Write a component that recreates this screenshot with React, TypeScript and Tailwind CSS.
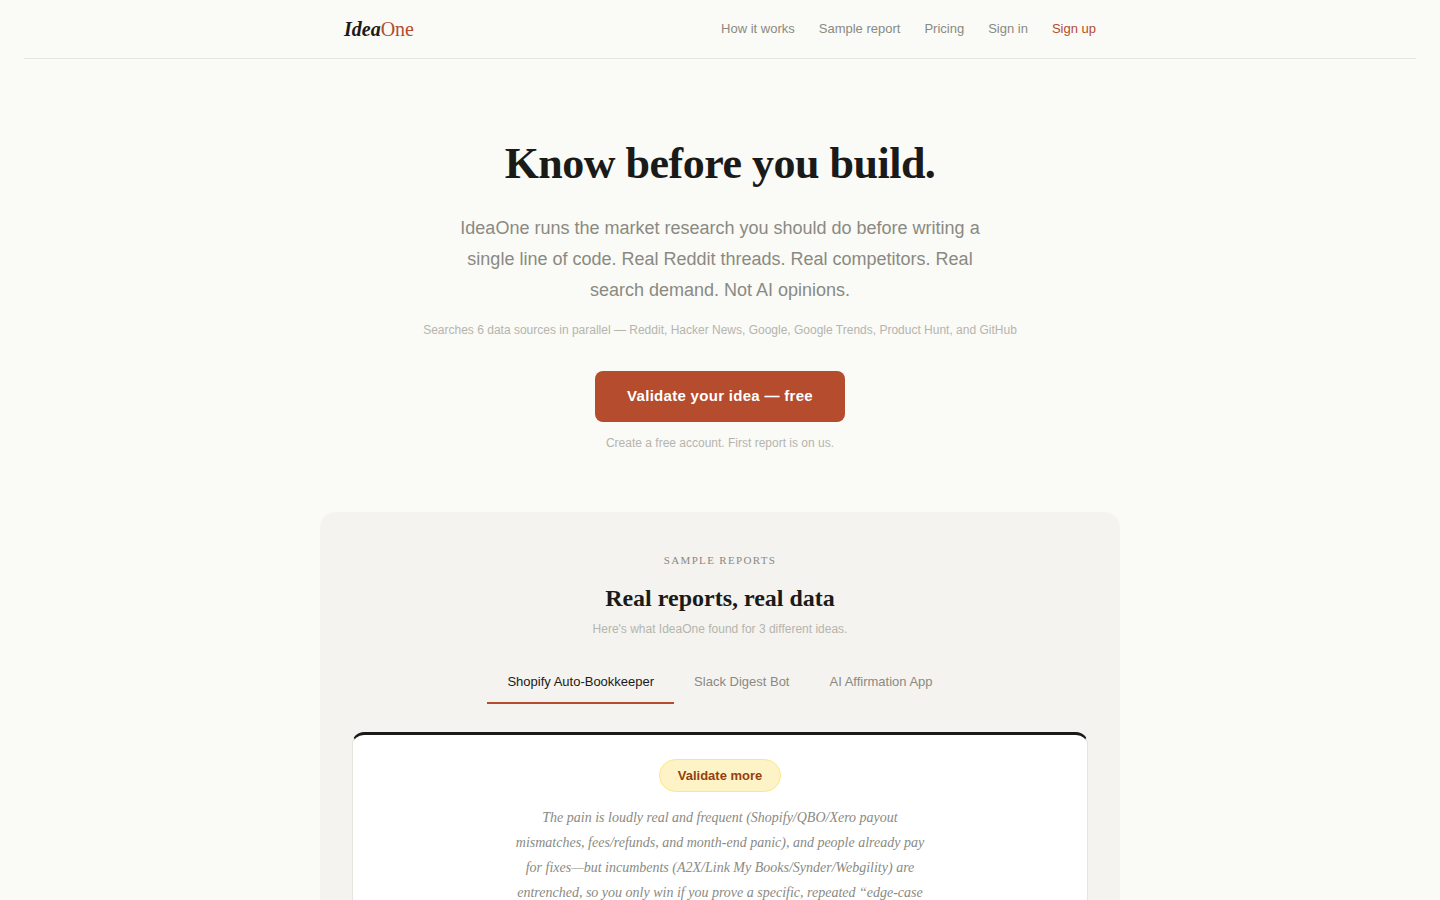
import { useState } from "react";

const links = [
  { label: "How it works", href: "#how" },
  { label: "Sample report", href: "#sample" },
  { label: "Pricing", href: "#pricing" },
  { label: "Sign in", href: "#signin" },
];

const tabs = ["Shopify Auto-Bookkeeper", "Slack Digest Bot", "AI Affirmation App"];

export default function App() {
  const [active, setActive] = useState(0);

  return (
    <div className="min-h-screen bg-[#fafaf7] px-6 font-['Liberation_Sans',Arial,sans-serif] text-[#1a1a18]">
      <header className="border-b border-[#e5e5e0]">
        <nav className="mx-auto flex h-[58px] max-w-[800px] items-center justify-between px-6">
          <a href="#home" className="font-['Liberation_Serif',serif] text-xl">
            <span className="font-bold italic">Idea</span>
            <span className="text-[#b44c2d]">One</span>
          </a>
          <div className="flex gap-6 text-[13px] text-[#8a8a82]">
            {links.map((link) => (
              <a key={link.label} href={link.href}>{link.label}</a>
            ))}
            <a href="#signup" className="text-[#b44c2d]">Sign up</a>
          </div>
        </nav>
      </header>

      <main className="mx-auto max-w-[800px]">
        <section className="flex flex-col items-center pt-20 text-center">
          <h1 className="font-['Liberation_Serif',serif] text-[44px] leading-[50px] font-bold tracking-[-0.5px]">
            Know before you build.
          </h1>
          <p className="mt-6 max-w-[540px] text-lg leading-[31px] text-[#8a8a82]">
            IdeaOne runs the market research you should do before writing a single line of code.
            Real Reddit threads. Real competitors. Real search demand. Not AI opinions.
          </p>
          <p className="mt-[15px] text-xs leading-[18px] text-[#b5b5ad]">
            Searches 6 data sources in parallel — Reddit, Hacker News, Google, Google Trends, Product Hunt, and GitHub
          </p>
          <button className="mt-8 h-[51px] rounded-lg bg-[#b44c2d] px-8 text-[15px] font-bold tracking-[0.3px] text-white">
            Validate your idea — free
          </button>
          <p className="mt-3 text-xs leading-[18px] text-[#b5b5ad]">
            Create a free account. First report is on us.
          </p>
        </section>

        <section id="sample" className="mt-[60px] rounded-2xl bg-[#f4f3f0] px-8 pt-10 text-center">
          <p className="font-['Liberation_Serif',serif] text-[11px] leading-4 tracking-[0.12em] text-[#8a8a82]">
            SAMPLE REPORTS
          </p>
          <h2 className="mt-4 font-['Liberation_Serif',serif] text-2xl leading-7 font-bold">
            Real reports, real data
          </h2>
          <p className="mt-2 text-xs leading-[18px] text-[#b5b5ad]">
            Here's what IdeaOne found for 3 different ideas.
          </p>
          <div role="tablist" className="mt-6 flex justify-center">
            {tabs.map((tab, i) => (
              <button
                key={tab}
                role="tab"
                aria-selected={i === active}
                onClick={() => setActive(i)}
                className={`h-[42px] border-b-2 px-5 text-[13px] ${i === active ? "border-[#b44c2d] text-[#1a1a18]" : "border-transparent text-[#8a8a82]"}`}
              >
                {tab}
              </button>
            ))}
          </div>
          <article className="mt-7 flex flex-col items-center rounded-xl border border-t-[3px] border-[#e5e5e0] border-t-[#1a1a18] bg-white px-8 pt-6 pb-8">
            <span className="rounded-full border border-[#fde68a] bg-[#fef3c7] px-[18px] py-1.5 text-[13px] leading-[19px] font-bold text-[#92400e]">
              Validate more
            </span>
            <p className="mt-[13px] max-w-[420px] font-['Liberation_Serif',serif] text-sm leading-[25px] text-[#8a8a82] italic">
              The pain is loudly real and frequent (Shopify/QBO/Xero payout mismatches, fees/refunds,
              and month-end panic), and people already pay for fixes—but incumbents (A2X/Link My
              Books/Synder/Webgility) are entrenched, so you only win if you prove a specific,
              repeated “edge-case
            </p>
          </article>
        </section>
      </main>
    </div>
  );
}
